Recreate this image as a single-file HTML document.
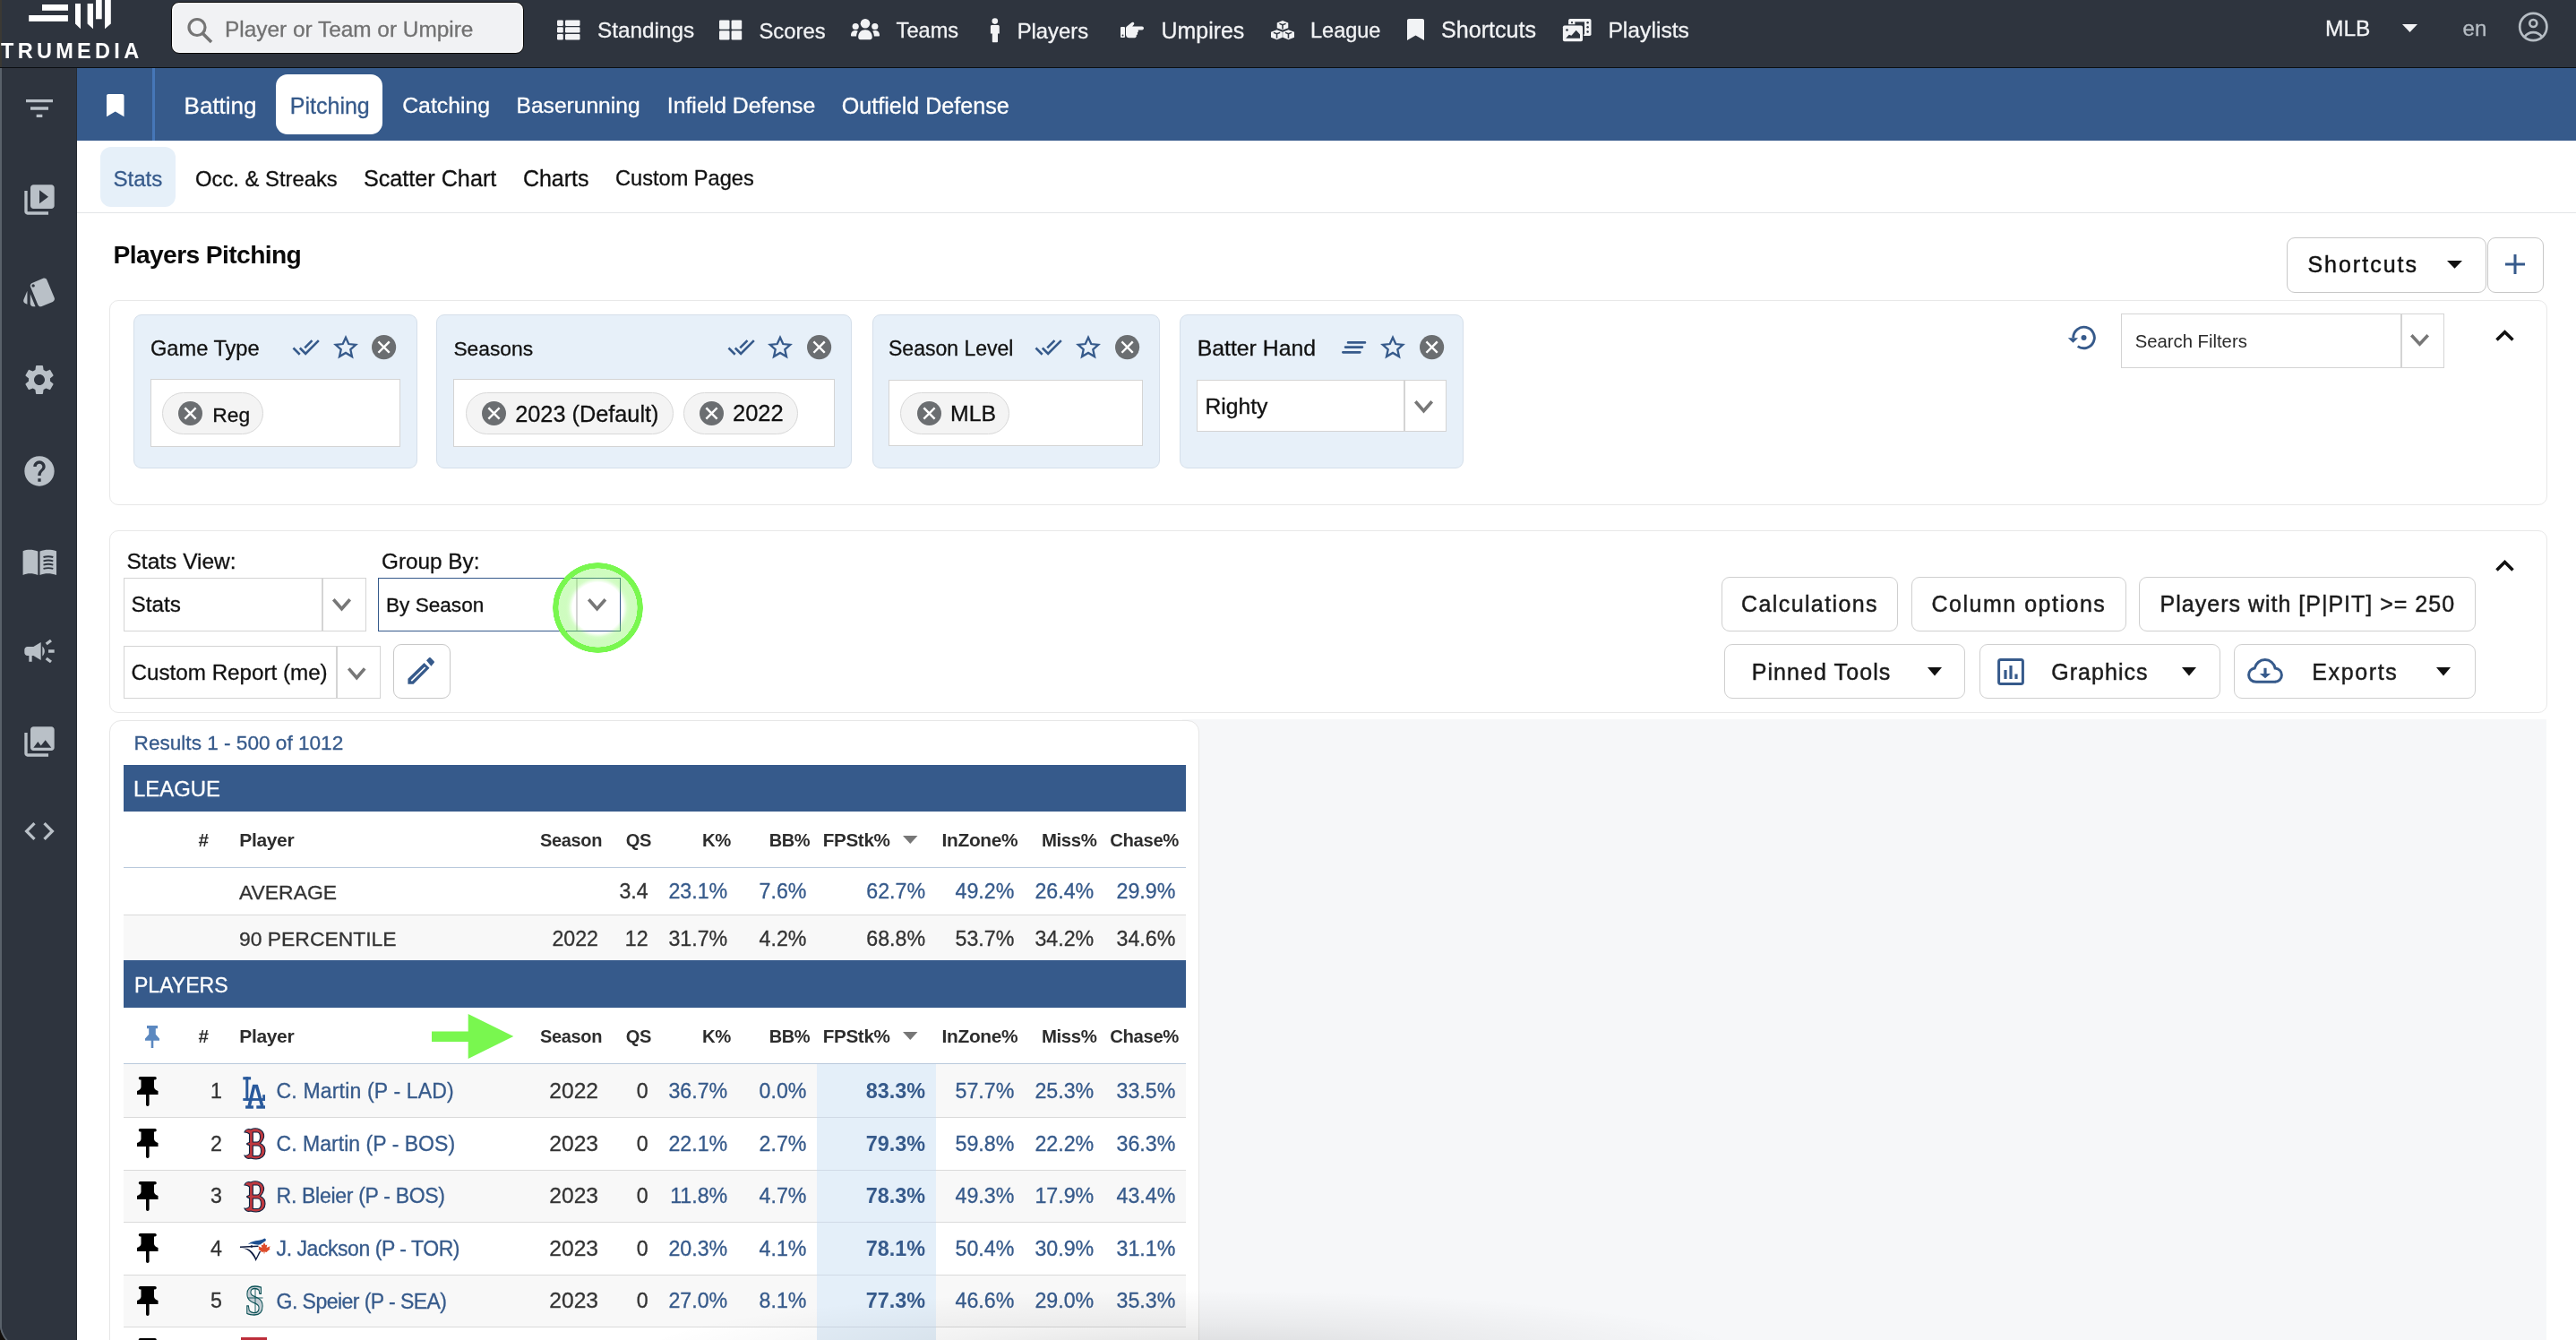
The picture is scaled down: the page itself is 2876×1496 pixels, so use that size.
<!DOCTYPE html><html><head><meta charset="utf-8"><style>html,body{margin:0;padding:0;}body{width:2876px;height:1496px;position:relative;overflow:hidden;background:#fff;font-family:"Liberation Sans",sans-serif;}.t{position:absolute;white-space:nowrap;}svg{overflow:visible;}</style></head><body><div id="root" style="position:absolute;left:0;top:0;width:2876px;height:1496px;overflow:hidden;background:#fff;will-change:transform"><div style="position:absolute;left:0px;top:0px;width:2876px;height:75px;box-sizing:border-box;background:#2e343e"></div>
<div style="position:absolute;left:0px;top:75px;width:2876px;height:1.2999999999999972px;box-sizing:border-box;background:#0b0e12"></div>
<div style="position:absolute;left:0px;top:0px;width:1.8px;height:75px;box-sizing:border-box;background:#3b3934"></div>
<svg style="position:absolute;left:0px;top:0px;" width="170" height="75" viewBox="0 0 170 75"><g fill="#fff"><rect x="47" y="5" width="29" height="6.8"/><rect x="32.2" y="17" width="43.7" height="6.9"/><path d="M84 4.1H90V32.3L84 26.5Z"/><path d="M97.6 4.1H104V32.3L97.6 26.5Z"/><rect x="107" y="0" width="6.7" height="21.3"/><path d="M117 0H123.8V26.5L117 32.3Z"/></g><text x="1" y="65" fill="#fff" font-family="Liberation Sans" font-weight="700" font-size="23.5" letter-spacing="4.3">TRUMEDIA</text></svg>
<div style="position:absolute;left:191px;top:2px;width:394px;height:58px;box-sizing:border-box;background:#f1f2f4;border:1.6px solid #050505;box-shadow:inset 0 0 0 1.3px #fff;border-radius:9px"></div>
<svg style="position:absolute;left:207px;top:18px;" width="34" height="32" viewBox="0 0 34 32"><circle cx="13" cy="12.5" r="9" fill="none" stroke="#757575" stroke-width="3.2"/><path d="M19.5 19.5L29 29" stroke="#757575" stroke-width="3.6" stroke-linecap="butt"/></svg>
<div class="t" style="left:251.0px;top:20.7px;font-size:24.4px;line-height:24.4px;color:#717171;font-weight:400;-webkit-text-stroke-width:0.3px;">Player or Team or Umpire</div>
<svg style="position:absolute;left:622px;top:22px;" width="26" height="23" viewBox="0 0 26 23"><g fill="#f2f3f5"><rect x="0" y="0.4" width="6.8" height="6.5" rx="1.2"/><rect x="9" y="0.4" width="16.5" height="6.5" rx="1.2"/><rect x="0" y="8.3" width="6.8" height="6.2" rx="1.2"/><rect x="9" y="8.3" width="16.5" height="6.2" rx="1.2"/><rect x="0" y="15.9" width="6.8" height="6.6" rx="1.2"/><rect x="9" y="15.9" width="16.5" height="6.6" rx="1.2"/></g></svg>
<div class="t" style="left:667.0px;top:22.0px;font-size:24.3px;line-height:24.3px;color:#f2f3f5;font-weight:400;-webkit-text-stroke-width:0.3px;">Standings</div>
<svg style="position:absolute;left:803px;top:22px;" width="26" height="23" viewBox="0 0 26 23"><g fill="#f2f3f5"><rect x="0" y="0.4" width="11.5" height="10.3" rx="1.2"/><rect x="13.6" y="0.4" width="11.6" height="10.3" rx="1.2"/><rect x="0" y="12.2" width="11.5" height="10.3" rx="1.2"/><rect x="13.6" y="12.2" width="11.6" height="10.3" rx="1.2"/></g></svg>
<div class="t" style="left:847.5px;top:22.5px;font-size:23.8px;line-height:23.8px;color:#f2f3f5;font-weight:400;-webkit-text-stroke-width:0.3px;">Scores</div>
<svg style="position:absolute;left:950px;top:21px;" width="32" height="24" viewBox="0 0 32 24"><g fill="#f2f3f5"><circle cx="16" cy="5.3" r="5.3"/><path d="M8.2 20.5c0-5 3.2-8.2 7.8-8.2s7.8 3.2 7.8 8.2c0 1.6-1 2.8-2.4 2.8H10.6c-1.4 0-2.4-1.2-2.4-2.8z"/><circle cx="5.2" cy="8.5" r="3.6"/><path d="M0 18.8c0-3.6 1.8-5.7 5.2-5.7 1 0 1.9.2 2.6.6-1 1.5-1.6 3.4-1.7 5.9H1.2C.5 19.6 0 19.3 0 18.8z"/><circle cx="26.8" cy="8.5" r="3.6"/><path d="M32 18.8c0-3.6-1.8-5.7-5.2-5.7-1 0-1.9.2-2.6.6 1 1.5 1.6 3.4 1.7 5.9h4.9c.7 0 1.2-.3 1.2-.8z"/></g></svg>
<div class="t" style="left:1000.6px;top:22.6px;font-size:23.6px;line-height:23.6px;color:#f2f3f5;font-weight:400;-webkit-text-stroke-width:0.3px;">Teams</div>
<svg style="position:absolute;left:1104px;top:20px;" width="13" height="28" viewBox="0 0 13 28"><g fill="#f2f3f5"><circle cx="6.8" cy="3.6" r="3.3"/><path d="M3.4 7.9h6.8c.9 0 1.6.7 1.6 1.6V17.6H10V26.2c0 .6-.5 1-1 1H4.8c-.5 0-1-.4-1-1V17.6H1.9V9.5c0-.9.6-1.6 1.5-1.6z"/></g></svg>
<div class="t" style="left:1135.7px;top:22.5px;font-size:23.8px;line-height:23.8px;color:#f2f3f5;font-weight:400;-webkit-text-stroke-width:0.3px;">Players</div>
<svg style="position:absolute;left:1251px;top:23px;" width="26" height="20" viewBox="0 0 26 20"><g fill="#f2f3f5"><rect x="0" y="7" width="5" height="12" rx="1"/><path d="M6 8.5c0-1.2.8-1.9 1.7-2.6L12 2.5c.9-.8 2-.9 2.8-.2.7.6.6 1.6 0 2.3l-1.6 2h10.9c1 0 1.9.8 1.9 1.9s-.9 1.9-1.9 1.9h-4.6c.3.4.4.8.4 1.3 0 .8-.5 1.5-1.2 1.8.2.3.3.7.3 1.1 0 .9-.6 1.6-1.4 1.8.1.3.2.5.2.9 0 1-.8 1.9-1.9 1.9H9.5c-2 0-3.5-1.6-3.5-3.5z"/><circle cx="2.5" cy="16.5" r="1" fill="#2e343e"/></g></svg>
<div class="t" style="left:1296.6px;top:21.5px;font-size:24.9px;line-height:24.9px;color:#f2f3f5;font-weight:400;-webkit-text-stroke-width:0.3px;">Umpires</div>
<svg style="position:absolute;left:1419px;top:23px;" width="26" height="23" viewBox="0 0 26 23"><g fill="#f2f3f5"><g transform="scale(0.963,0.92)"><path d="M13.5 0l6.5 2.6v6.3l-6.5 2.6-6.5-2.6V2.6z"/><path d="M6.8 11.2l6.5 2.6v6.6l-6.5 2.8L0 20.4v-6.6z"/><path d="M20.2 11.2l6.8 2.6v6.6l-6.8 2.8-6.5-2.8v-6.6z"/><path d="M3 14.5l3.8 1.5 3.8-1.5M16.6 14.5l3.6 1.5 3.8-1.5M9.8 3.7l3.7 1.5 3.7-1.5" stroke="#2e343e" stroke-width="1.6" fill="none"/><path d="M6.8 16v5.5M20.2 16v5.5M13.5 5.2v5" stroke="#2e343e" stroke-width="1.6"/></g></g></svg>
<div class="t" style="left:1463.0px;top:22.7px;font-size:23.5px;line-height:23.5px;color:#f2f3f5;font-weight:400;-webkit-text-stroke-width:0.3px;">League</div>
<svg style="position:absolute;left:1571px;top:21px;" width="19" height="24" viewBox="0 0 19 24"><g fill="#f2f3f5"><path d="M0 2c0-1.1.9-2 2-2h15c1.1 0 2 .9 2 2v22l-9.5-5.6L0 24z"/></g></svg>
<div class="t" style="left:1609.0px;top:21.4px;font-size:25.1px;line-height:25.1px;color:#f2f3f5;font-weight:400;-webkit-text-stroke-width:0.3px;">Shortcuts</div>
<svg style="position:absolute;left:1730px;top:12px;" width="50" height="40" viewBox="0 0 50 40"><rect x="21.1" y="8.9" width="25.4" height="19.1" rx="1.8" fill="#f2f3f5"/><rect x="28.4" y="12.4" width="10.6" height="14" fill="#2e343e"/><circle cx="25" cy="13.2" r="1.1" fill="#2e343e"/><circle cx="42.6" cy="13.3" r="1.25" fill="#2e343e"/><circle cx="42.6" cy="18.2" r="1.25" fill="#2e343e"/><circle cx="42.6" cy="23.5" r="1.25" fill="#2e343e"/><rect x="13.7" y="15.3" width="24.5" height="20.2" rx="2.2" fill="#2e343e"/><rect x="14.9" y="16.5" width="22.1" height="17.8" rx="1.8" fill="#f2f3f5"/><circle cx="19.5" cy="21.5" r="1.35" fill="#2e343e"/><path d="M18.2 30.7L21.8 26.7L24.4 27.7L29.7 21.8L34 26.4V30.7Z" fill="#2e343e"/></svg>
<div class="t" style="left:1795.4px;top:21.7px;font-size:24.7px;line-height:24.7px;color:#f2f3f5;font-weight:400;-webkit-text-stroke-width:0.3px;">Playlists</div>
<div class="t" style="left:2596.0px;top:19.5px;font-size:24.5px;line-height:24.5px;color:#f2f3f5;font-weight:400;-webkit-text-stroke-width:0.3px;">MLB</div>
<svg style="position:absolute;left:2682px;top:27px;" width="17" height="10" viewBox="0 0 17 10"><path d="M0 0h17L8.5 9z" fill="#f2f3f5"/></svg>
<div class="t" style="left:2749.6px;top:19.9px;font-size:24px;line-height:24px;color:#b6bdc4;font-weight:400;-webkit-text-stroke-width:0.3px;">en</div>
<svg style="position:absolute;left:2810px;top:12px;" width="36" height="36" viewBox="0 0 36 36"><g fill="none" stroke="#b6bdc4" stroke-width="2.7"><circle cx="18.3" cy="18" r="15.1"/><circle cx="18.3" cy="14" r="4"/><path d="M8.6 29.3C11 25.8 14.5 24.2 18.3 24.2S25.6 25.8 28 29.3"/></g></svg>
<div style="position:absolute;left:0px;top:76px;width:86px;height:1420px;box-sizing:border-box;background:#2e343e"></div>
<div style="position:absolute;left:0px;top:76.3px;width:1.8px;height:1419.7px;box-sizing:border-box;background:#59616a"></div>
<div style="position:absolute;left:85px;top:76px;width:1px;height:1420px;box-sizing:border-box;background:#262b33"></div>
<svg style="position:absolute;left:0px;top:1466px;" width="40" height="30" viewBox="0 0 40 30"><path d="M0 8A29.3 29.3 0 0 0 7.5 31L0 31Z" fill="#120e0b"/><path d="M0.9 8A29.3 29.3 0 0 0 8.3 31" fill="none" stroke="#5a626b" stroke-width="1.8"/></svg>
<svg style="position:absolute;left:24.299599999999998px;top:100.9996px;" width="40.0008" height="40.0008" viewBox="0 0 24 24"><path fill="#b9c0c7" d="M10 18h4v-2h-4v2zM3 6v2h18V6H3zm3 7h12v-2H6v2z"/></svg>
<svg style="position:absolute;left:24.299599999999998px;top:202.9996px;" width="40.0008" height="40.0008" viewBox="0 0 24 24"><path fill="#b9c0c7" d="M4 6H2v14c0 1.1.9 2 2 2h14v-2H4V6zm16-4H8c-1.1 0-2 .9-2 2v12c0 1.1.9 2 2 2h12c1.1 0 2-.9 2-2V4c0-1.1-.9-2-2-2zm-8 12.5v-9l6 4.5-6 4.5z"/></svg>
<svg style="position:absolute;left:24.299599999999998px;top:305.5996px;" width="40.0008" height="40.0008" viewBox="0 0 24 24"><path fill="#b9c0c7" d="M2.53 19.65l1.34.56v-9.03l-2.43 5.86c-.41 1.02.08 2.19 1.09 2.61zm19.5-3.7L17.07 3.98c-.31-.75-1.04-1.21-1.81-1.23-.26 0-.53.04-.79.15L7.1 5.950c-.75.31-1.21 1.03-1.23 1.8-.01.27.04.54.15.8l4.96 11.97c.31.76 1.05 1.22 1.83 1.230.26 0 .52-.05.77-.15l7.36-3.05c1.02-.42 1.51-1.59 1.09-2.6zM7.88 8.75c-.55 0-1-.45-1-1s.45-1 1-1 1 .45 1 1-.45 1-1 1zm-2 11c0 1.1.9 2 2 2h1.45l-3.45-8.34v6.34z"/></svg>
<svg style="position:absolute;left:24.299599999999998px;top:403.9996px;" width="40.0008" height="40.0008" viewBox="0 0 24 24"><path fill="#b9c0c7" d="M19.14,12.94c0.04-0.3,0.06-0.61,0.06-0.94c0-0.32-0.02-0.64-0.07-0.94l2.03-1.58c0.18-0.14,0.23-0.41,0.12-0.61 l-1.92-3.32c-0.12-0.22-0.37-0.29-0.59-0.22l-2.39,0.96c-0.5-0.38-1.03-0.7-1.62-0.94L14.4,2.81c-0.04-0.24-0.24-0.41-0.48-0.41 h-3.84c-0.24,0-0.43,0.17-0.47,0.41L9.25,5.35C8.66,5.59,8.12,5.92,7.63,6.29L5.24,5.33c-0.22-0.08-0.47,0-0.59,0.22L2.74,8.87 C2.62,9.08,2.66,9.34,2.86,9.48l2.03,1.58C4.84,11.36,4.8,11.69,4.8,12s0.02,0.64,0.07,0.94l-2.03,1.58 c-0.18,0.14-0.23,0.41-0.12,0.61l1.920,3.32c0.12,0.22,0.37,0.29,0.59,0.22l2.39-0.96c0.5,0.38,1.03,0.7,1.62,0.94l0.36,2.54 c0.05,0.24,0.24,0.41,0.48,0.41h3.84c0.24,0,0.44-0.17,0.47-0.41l0.36-2.54c0.59-0.24,1.13-0.56,1.62-0.94l2.39,0.96 c0.22,0.08,0.47,0,0.59-0.22l1.92-3.32c0.12-0.22,0.07-0.47-0.12-0.61L19.14,12.94z M12,15.6c-1.98,0-3.6-1.62-3.6-3.6 s1.62-3.6,3.6-3.6s3.6,1.62,3.6,3.6S13.98,15.6,12,15.6z"/></svg>
<svg style="position:absolute;left:24.299599999999998px;top:505.9996px;" width="40.0008" height="40.0008" viewBox="0 0 24 24"><path fill="#b9c0c7" d="M12 2C6.48 2 2 6.48 2 12s4.48 10 10 10 10-4.48 10-10S17.52 2 12 2zm1 17h-2v-2h2v2zm2.07-7.750l-.9.92C13.45 12.9 13 13.5 13 15h-2v-.5c0-1.1.45-2.1 1.17-2.83l1.24-1.26c.37-.36.59-.86.59-1.41 0-1.1-.9-2-2-2s-2 .9-2 2H8c0-2.21 1.79-4 4-4s4 1.79 4 4c0 .88-.36 1.68-.93 2.25z"/></svg>
<svg style="position:absolute;left:25px;top:612px;" width="40" height="32" viewBox="0 0 40 32"><path fill="#b9c0c7" d="M0.6 3.2C5.5 1.2 11.5 1.2 17.3 3.6V30C11.5 27.8 5.5 27.8 0.6 30Z M19.5 3.6C25.3 1.2 31.3 1.2 38 3.2V30C31.3 27.8 25.3 27.8 19.5 30Z"/><path d="M23.5 10C27 9 31 9 34.3 10M23.5 14.3C27 13.3 31 13.3 34.3 14.3M23.5 18.6C27 17.6 31 17.6 34.3 18.6M23.5 22.9C27 21.9 31 21.9 34.3 22.9" stroke="#2e343e" stroke-width="1.9" fill="none"/></svg>
<svg style="position:absolute;left:24.299599999999998px;top:706.5996px;" width="40.0008" height="40.0008" viewBox="0 0 24 24"><path fill="#b9c0c7" d="M18 11v2h4v-2h-4zm-2 6.61c.96.71 2.21 1.65 3.2 2.39.4-.53.8-1.07 1.2-1.6-.99-.74-2.24-1.68-3.2-2.4-.4.54-.8 1.08-1.2 1.61zM20.4 5.6c-.4-.53-.8-1.07-1.2-1.6-.99.74-2.24 1.68-3.2 2.4.4.53.8 1.070 1.2 1.6.96-.72 2.21-1.65 3.2-2.4zM4 9c-1.1 0-2 .9-2 2v2c0 1.1.9 2 2 2h1v4h2v-4h1l5 3V6L8 9H4zm11.5 3c0-1.33-.58-2.53-1.5-3.35v6.69c.92-.81 1.5-2.01 1.5-3.34z"/></svg>
<svg style="position:absolute;left:24.299599999999998px;top:807.9996px;" width="40.0008" height="40.0008" viewBox="0 0 24 24"><path fill="#b9c0c7" d="M22 16V4c0-1.1-.9-2-2-2H8c-1.1 0-2 .9-2 2v12c0 1.1.9 2 2 2h12c1.1 0 2-.9 2-2zm-11-4l2.03 2.71L16 11l4 5H8l3-4zM2 6v14c0 1.1.9 2 2 2h14v-2H4V6H2z"/></svg>
<svg style="position:absolute;left:24.299599999999998px;top:907.7995999999999px;" width="40.0008" height="40.0008" viewBox="0 0 24 24"><path fill="#b9c0c7" d="M9.4 16.6L4.8 12l4.6-4.6L8 6l-6 6 6 6 1.4-1.4zm5.2 0l4.6-4.6-4.6-4.6L16 6l6 6-6 6-1.4-1.4z"/></svg>
<div style="position:absolute;left:86px;top:76px;width:2790px;height:81px;box-sizing:border-box;background:#365a8b"></div>
<svg style="position:absolute;left:118.8px;top:104.8px;" width="19.5" height="25.2" viewBox="0 0 19.5 25.2"><path d="M0 2C0 .9.9 0 2 0h15.5c1.1 0 2 .9 2 2v23.2l-9.75-5.7L0 25.2z" fill="#fff"/></svg>
<div style="position:absolute;left:170px;top:76px;width:3px;height:81px;box-sizing:border-box;background:#4677b8"></div>
<div style="position:absolute;left:308px;top:83px;width:119px;height:67px;box-sizing:border-box;background:#fff;border-radius:13px"></div>
<div class="t" style="left:205.6px;top:105.0px;font-size:26px;line-height:26px;color:#fff;font-weight:400;-webkit-text-stroke-width:0.3px;">Batting</div>
<div class="t" style="left:323.8px;top:105.8px;font-size:25px;line-height:25px;color:#365a8b;font-weight:400;-webkit-text-stroke-width:0.3px;">Pitching</div>
<div class="t" style="left:449.2px;top:106.0px;font-size:24.8px;line-height:24.8px;color:#fff;font-weight:400;-webkit-text-stroke-width:0.3px;">Catching</div>
<div class="t" style="left:576.5px;top:106.2px;font-size:24.6px;line-height:24.6px;color:#fff;font-weight:400;-webkit-text-stroke-width:0.3px;">Baserunning</div>
<div class="t" style="left:744.8px;top:106.0px;font-size:24.8px;line-height:24.8px;color:#fff;font-weight:400;-webkit-text-stroke-width:0.3px;">Infield Defense</div>
<div class="t" style="left:939.8px;top:105.8px;font-size:25.1px;line-height:25.1px;color:#fff;font-weight:400;-webkit-text-stroke-width:0.3px;">Outfield Defense</div>
<div style="position:absolute;left:86px;top:157px;width:2790px;height:81px;box-sizing:border-box;background:#fff"></div>
<div style="position:absolute;left:112px;top:164px;width:84px;height:67px;box-sizing:border-box;background:#e6f0f9;border-radius:12px"></div>
<div class="t" style="left:126.4px;top:187.6px;font-size:24.1px;line-height:24.1px;color:#365a8b;font-weight:400;-webkit-text-stroke-width:0.3px;">Stats</div>
<div class="t" style="left:218.0px;top:187.9px;font-size:23.8px;line-height:23.8px;color:#111;font-weight:400;-webkit-text-stroke-width:0.3px;">Occ. &amp; Streaks</div>
<div class="t" style="left:405.9px;top:186.7px;font-size:25.2px;line-height:25.2px;color:#111;font-weight:400;-webkit-text-stroke-width:0.3px;">Scatter Chart</div>
<div class="t" style="left:583.9px;top:186.8px;font-size:25px;line-height:25px;color:#111;font-weight:400;-webkit-text-stroke-width:0.3px;">Charts</div>
<div class="t" style="left:687.0px;top:188.0px;font-size:23.6px;line-height:23.6px;color:#111;font-weight:400;-webkit-text-stroke-width:0.3px;">Custom Pages</div>
<div style="position:absolute;left:86px;top:237px;width:2790px;height:1px;box-sizing:border-box;background:#e3e5e8"></div>
<div class="t" style="left:126.5px;top:270.1px;font-size:28.2px;line-height:28.2px;color:#0a0a0a;font-weight:700;letter-spacing:-0.6px;">Players Pitching</div>
<div style="position:absolute;left:2553px;top:265px;width:223px;height:62px;box-sizing:border-box;background:#fff;border:1.5px solid #c8c8c8;border-radius:9px"></div>
<div class="t" style="left:2576.4px;top:283.1px;font-size:25px;line-height:25px;color:#111;font-weight:400;letter-spacing:2.0px;-webkit-text-stroke:0.45px #111;">Shortcuts</div>
<svg style="position:absolute;left:2732px;top:290.5px;" width="17" height="9" viewBox="0 0 17 9"><path d="M0 0h17L8.5 8.8z" fill="#111"/></svg>
<div style="position:absolute;left:2777px;top:265px;width:63px;height:62px;box-sizing:border-box;background:#fff;border:1.5px solid #c8c8c8;border-radius:9px"></div>
<svg style="position:absolute;left:2797px;top:284px;" width="22" height="22" viewBox="0 0 22 22"><path d="M11 0v22M0 11h22" stroke="#365a8b" stroke-width="3"/></svg>
<div style="position:absolute;left:122px;top:335px;width:2722px;height:229px;box-sizing:border-box;background:#fff;border:1.5px solid #e8e8e8;border-radius:10px"></div>
<div style="position:absolute;left:149px;top:350.5px;width:317px;height:172.5px;box-sizing:border-box;background:#e7f0f9;border:1.5px solid #d5dfea;border-radius:9px"></div>
<div class="t" style="left:168.0px;top:377.7px;font-size:23.6px;line-height:23.6px;color:#111;font-weight:400;-webkit-text-stroke-width:0.3px;">Game Type</div>
<svg style="position:absolute;left:325.8px;top:372.2px;" width="31.2" height="31.2" viewBox="0 0 24 24"><path fill="#365a8b" d="M18 7l-1.41-1.41-6.34 6.34 1.41 1.41L18 7zm4.24-1.41L11.66 16.17 7.48 12l-1.41 1.41L11.66 19l12-12-1.42-1.41zM.41 13.41L6 19l1.41-1.41L1.83 12 .41 13.41z"/></svg>
<svg style="position:absolute;left:372.5px;top:374.8px;" width="26" height="25" viewBox="0 0 27 26"><path d="M13.5 1.8l3.4 7.6 8.3.8-6.2 5.6 1.8 8.2-7.3-4.3-7.3 4.3 1.8-8.2-6.2-5.6 8.3-.8z" fill="none" stroke="#365a8b" stroke-width="2.4" stroke-linejoin="miter"/></svg>
<svg style="position:absolute;left:415.09999999999997px;top:374.4px;" width="27.2" height="27.2" viewBox="0 0 27.2 27.2"><circle cx="13.6" cy="13.6" r="13.6" fill="#6b6e71"/><path d="M8.3 8.3L18.9 18.9M18.9 8.3L8.3 18.9" stroke="#fff" stroke-width="2.4" stroke-linecap="square"/></svg>
<div style="position:absolute;left:168px;top:423px;width:279px;height:76px;box-sizing:border-box;background:#fff;border:1.5px solid #d4d4d4"></div>
<div style="position:absolute;left:181px;top:438px;width:112.5px;height:47px;box-sizing:border-box;background:#f4f4f4;border:1.5px solid #d8d8d8;border-radius:24px"></div>
<svg style="position:absolute;left:199.0px;top:447.7px;" width="27.0" height="27.0" viewBox="0 0 27.0 27.0"><circle cx="13.5" cy="13.5" r="13.5" fill="#6b6e71"/><path d="M8.2 8.2L18.8 18.8M18.8 8.2L8.2 18.8" stroke="#fff" stroke-width="2.4" stroke-linecap="square"/></svg>
<div class="t" style="left:237.3px;top:451.7px;font-size:22.8px;line-height:22.8px;color:#111;font-weight:400;-webkit-text-stroke-width:0.3px;">Reg</div>
<div style="position:absolute;left:487px;top:350.5px;width:464px;height:172.5px;box-sizing:border-box;background:#e7f0f9;border:1.5px solid #d5dfea;border-radius:9px"></div>
<div class="t" style="left:506.4px;top:378.4px;font-size:22.8px;line-height:22.8px;color:#111;font-weight:400;-webkit-text-stroke-width:0.3px;">Seasons</div>
<svg style="position:absolute;left:811.5999999999999px;top:372.2px;" width="31.2" height="31.2" viewBox="0 0 24 24"><path fill="#365a8b" d="M18 7l-1.41-1.41-6.34 6.34 1.41 1.41L18 7zm4.24-1.41L11.66 16.17 7.48 12l-1.41 1.41L11.66 19l12-12-1.42-1.41zM.41 13.41L6 19l1.41-1.41L1.83 12 .41 13.41z"/></svg>
<svg style="position:absolute;left:858.0px;top:374.8px;" width="26" height="25" viewBox="0 0 27 26"><path d="M13.5 1.8l3.4 7.6 8.3.8-6.2 5.6 1.8 8.2-7.3-4.3-7.3 4.3 1.8-8.2-6.2-5.6 8.3-.8z" fill="none" stroke="#365a8b" stroke-width="2.4" stroke-linejoin="miter"/></svg>
<svg style="position:absolute;left:900.5px;top:374.4px;" width="27.2" height="27.2" viewBox="0 0 27.2 27.2"><circle cx="13.6" cy="13.6" r="13.6" fill="#6b6e71"/><path d="M8.3 8.3L18.9 18.9M18.9 8.3L8.3 18.9" stroke="#fff" stroke-width="2.4" stroke-linecap="square"/></svg>
<div style="position:absolute;left:506.4px;top:423px;width:425.20000000000005px;height:76px;box-sizing:border-box;background:#fff;border:1.5px solid #d4d4d4"></div>
<div style="position:absolute;left:520.3px;top:438px;width:231.30000000000007px;height:47px;box-sizing:border-box;background:#f4f4f4;border:1.5px solid #d8d8d8;border-radius:24px"></div>
<svg style="position:absolute;left:537.9px;top:447.7px;" width="27.0" height="27.0" viewBox="0 0 27.0 27.0"><circle cx="13.5" cy="13.5" r="13.5" fill="#6b6e71"/><path d="M8.2 8.2L18.8 18.8M18.8 8.2L8.2 18.8" stroke="#fff" stroke-width="2.4" stroke-linecap="square"/></svg>
<div class="t" style="left:575.2px;top:449.6px;font-size:25.3px;line-height:25.3px;color:#111;font-weight:400;-webkit-text-stroke-width:0.3px;">2023 (Default)</div>
<div style="position:absolute;left:763.2px;top:438px;width:127.5px;height:47px;box-sizing:border-box;background:#f4f4f4;border:1.5px solid #d8d8d8;border-radius:24px"></div>
<svg style="position:absolute;left:780.8px;top:447.7px;" width="27.0" height="27.0" viewBox="0 0 27.0 27.0"><circle cx="13.5" cy="13.5" r="13.5" fill="#6b6e71"/><path d="M8.2 8.2L18.8 18.8M18.8 8.2L8.2 18.8" stroke="#fff" stroke-width="2.4" stroke-linecap="square"/></svg>
<div class="t" style="left:818.0px;top:449.4px;font-size:25.5px;line-height:25.5px;color:#111;font-weight:400;-webkit-text-stroke-width:0.3px;">2022</div>
<div style="position:absolute;left:973.6px;top:350.5px;width:320.9999999999999px;height:172.5px;box-sizing:border-box;background:#e7f0f9;border:1.5px solid #d5dfea;border-radius:9px"></div>
<div class="t" style="left:992.0px;top:378.2px;font-size:23px;line-height:23px;color:#111;font-weight:400;-webkit-text-stroke-width:0.3px;">Season Level</div>
<svg style="position:absolute;left:1155.3px;top:372.2px;" width="31.2" height="31.2" viewBox="0 0 24 24"><path fill="#365a8b" d="M18 7l-1.41-1.41-6.34 6.34 1.41 1.41L18 7zm4.24-1.41L11.66 16.17 7.48 12l-1.41 1.41L11.66 19l12-12-1.42-1.41zM.41 13.41L6 19l1.41-1.41L1.83 12 .41 13.41z"/></svg>
<svg style="position:absolute;left:1202.0px;top:374.8px;" width="26" height="25" viewBox="0 0 27 26"><path d="M13.5 1.8l3.4 7.6 8.3.8-6.2 5.6 1.8 8.2-7.3-4.3-7.3 4.3 1.8-8.2-6.2-5.6 8.3-.8z" fill="none" stroke="#365a8b" stroke-width="2.4" stroke-linejoin="miter"/></svg>
<svg style="position:absolute;left:1244.8000000000002px;top:374.4px;" width="27.2" height="27.2" viewBox="0 0 27.2 27.2"><circle cx="13.6" cy="13.6" r="13.6" fill="#6b6e71"/><path d="M8.3 8.3L18.9 18.9M18.9 8.3L8.3 18.9" stroke="#fff" stroke-width="2.4" stroke-linecap="square"/></svg>
<div style="position:absolute;left:992px;top:423.8px;width:283.5px;height:74.69999999999999px;box-sizing:border-box;background:#fff;border:1.5px solid #d4d4d4"></div>
<div style="position:absolute;left:1005px;top:438px;width:122.40000000000009px;height:47px;box-sizing:border-box;background:#f4f4f4;border:1.5px solid #d8d8d8;border-radius:24px"></div>
<svg style="position:absolute;left:1023.5px;top:447.7px;" width="27.0" height="27.0" viewBox="0 0 27.0 27.0"><circle cx="13.5" cy="13.5" r="13.5" fill="#6b6e71"/><path d="M8.2 8.2L18.8 18.8M18.8 8.2L8.2 18.8" stroke="#fff" stroke-width="2.4" stroke-linecap="square"/></svg>
<div class="t" style="left:1061.0px;top:450.0px;font-size:24.8px;line-height:24.8px;color:#111;font-weight:400;-webkit-text-stroke-width:0.3px;">MLB</div>
<div style="position:absolute;left:1317.4px;top:350.5px;width:316.79999999999995px;height:172.5px;box-sizing:border-box;background:#e7f0f9;border:1.5px solid #d5dfea;border-radius:9px"></div>
<div class="t" style="left:1336.7px;top:376.7px;font-size:24.8px;line-height:24.8px;color:#111;font-weight:400;-webkit-text-stroke-width:0.3px;">Batter Hand</div>
<svg style="position:absolute;left:1490.0px;top:370px;" width="40" height="35" viewBox="0 0 40 35"><path d="M15.1 12.4H33.9M12.1 17.6H30.9M9.4 23.3H28.3" stroke="#365a8b" stroke-width="2.8" stroke-linecap="round"/></svg>
<svg style="position:absolute;left:1541.5px;top:374.8px;" width="26" height="25" viewBox="0 0 27 26"><path d="M13.5 1.8l3.4 7.6 8.3.8-6.2 5.6 1.8 8.2-7.3-4.3-7.3 4.3 1.8-8.2-6.2-5.6 8.3-.8z" fill="none" stroke="#365a8b" stroke-width="2.4" stroke-linejoin="miter"/></svg>
<svg style="position:absolute;left:1584.5px;top:374.4px;" width="27.2" height="27.2" viewBox="0 0 27.2 27.2"><circle cx="13.6" cy="13.6" r="13.6" fill="#6b6e71"/><path d="M8.3 8.3L18.9 18.9M18.9 8.3L8.3 18.9" stroke="#fff" stroke-width="2.4" stroke-linecap="square"/></svg>
<div style="position:absolute;left:1336.4px;top:423.8px;width:278.79999999999995px;height:58.39999999999998px;box-sizing:border-box;background:#fff;border:1.5px solid #d4d4d4"></div>
<div style="position:absolute;left:1567px;top:423.8px;width:1.5px;height:58.39999999999998px;box-sizing:border-box;background:#d4d4d4"></div>
<div class="t" style="left:1345.4px;top:442.3px;font-size:24.7px;line-height:24.7px;color:#111;font-weight:400;-webkit-text-stroke-width:0.3px;">Righty</div>
<svg style="position:absolute;left:1579px;top:445px;" width="21" height="17" viewBox="0 -2 21 17"><path d="M1.3 1.3L10.5 11.7L19.7 1.3" stroke="#777" stroke-width="3.6" fill="none"/></svg>
<svg style="position:absolute;left:2300px;top:350px;" width="50" height="50" viewBox="0 0 50 50"><path d="M14.7 26.9A11.8 11.8 0 1 1 19.7 36.6" fill="none" stroke="#365a8b" stroke-width="2.9"/><path d="M8.8 27.2H20.1L14.5 32.8z" fill="#365a8b"/><circle cx="26.5" cy="26.9" r="3" fill="#365a8b"/></svg>
<div style="position:absolute;left:2368px;top:350px;width:361px;height:61px;box-sizing:border-box;background:#fff;border:1.5px solid #d4d4d4"></div>
<div style="position:absolute;left:2680px;top:350px;width:1.5px;height:61px;box-sizing:border-box;background:#d4d4d4"></div>
<div class="t" style="left:2383.7px;top:371.2px;font-size:20.3px;line-height:20.3px;color:#2a2a2a;font-weight:400;-webkit-text-stroke-width:0px;">Search Filters</div>
<svg style="position:absolute;left:2691px;top:371px;" width="21" height="16.5" viewBox="0 -2 21 16.5"><path d="M1.3 1.3L10.5 11.2L19.7 1.3" stroke="#777" stroke-width="3.6" fill="none"/></svg>
<svg style="position:absolute;left:2786px;top:369px;" width="21" height="12" viewBox="0 0 21 12"><path d="M1.5 10.5L10.5 1.8L19.5 10.5" stroke="#111" stroke-width="3.6" fill="none"/></svg>
<div style="position:absolute;left:122px;top:592px;width:2722px;height:204px;box-sizing:border-box;background:#fff;border:1.5px solid #e8e8e8;border-radius:10px"></div>
<div class="t" style="left:141.5px;top:615.3px;font-size:24.5px;line-height:24.5px;color:#111;font-weight:400;-webkit-text-stroke-width:0.3px;">Stats View:</div>
<div class="t" style="left:426.0px;top:615.4px;font-size:24.3px;line-height:24.3px;color:#111;font-weight:400;-webkit-text-stroke-width:0.3px;">Group By:</div>
<div style="position:absolute;left:138px;top:645px;width:270.5px;height:59.5px;box-sizing:border-box;background:#fff;border:1.5px solid #d4d4d4"></div>
<div style="position:absolute;left:359px;top:645px;width:1.5px;height:59.5px;box-sizing:border-box;background:#d4d4d4"></div>
<div class="t" style="left:146.6px;top:663.4px;font-size:24.3px;line-height:24.3px;color:#111;font-weight:400;-webkit-text-stroke-width:0.3px;">Stats</div>
<svg style="position:absolute;left:371px;top:666px;" width="21" height="17" viewBox="0 -2 21 17"><path d="M1.3 1.3L10.5 11.7L19.7 1.3" stroke="#777" stroke-width="3.6" fill="none"/></svg>
<div style="position:absolute;left:422px;top:645px;width:270.5px;height:59.5px;box-sizing:border-box;background:#fff;border:1.5px solid #365a8b"></div>
<div style="position:absolute;left:643px;top:646px;width:1.5px;height:58px;box-sizing:border-box;background:#d4d4d4"></div>
<div class="t" style="left:431.0px;top:664.9px;font-size:22.6px;line-height:22.6px;color:#111;font-weight:400;-webkit-text-stroke-width:0.3px;">By Season</div>
<div style="position:absolute;left:138px;top:721px;width:286.5px;height:58.5px;box-sizing:border-box;background:#fff;border:1.5px solid #d4d4d4"></div>
<div style="position:absolute;left:375px;top:721px;width:1.5px;height:58.5px;box-sizing:border-box;background:#d4d4d4"></div>
<div class="t" style="left:146.6px;top:739.2px;font-size:24.2px;line-height:24.2px;color:#111;font-weight:400;-webkit-text-stroke-width:0.3px;">Custom Report (me)</div>
<svg style="position:absolute;left:387.6px;top:742.5px;" width="20.5" height="17" viewBox="0 -2 20.5 17"><path d="M1.3 1.3L10.25 11.7L19.2 1.3" stroke="#777" stroke-width="3.6" fill="none"/></svg>
<div style="position:absolute;left:438.5px;top:719px;width:64.0px;height:60.5px;box-sizing:border-box;background:#fff;border:1.5px solid #c8c8c8;border-radius:9px"></div>
<svg style="position:absolute;left:430px;top:710px;" width="90" height="80" viewBox="0 0 90 80"><path fill="#365a8b" d="M46 27.2L49 24.3C49.5 23.8 50.2 23.8 50.7 24.3L54.6 28.2C55.1 28.7 55.1 29.4 54.6 29.9L51.4 33.8Z"/><path fill-rule="evenodd" fill="#365a8b" d="M25.4 47.7L43.6 30.1L49.5 35.8L31.6 53.7H25.4ZM28.6 49.6L44.1 34.4L45.3 35.6L29.9 50.8Z"/></svg>
<div style="position:absolute;left:617px;top:627.8px;width:100.8px;height:100.8px;border-radius:50%;box-sizing:border-box;background:radial-gradient(circle closest-side, rgba(121,247,79,0) 0, rgba(121,247,79,0) 56%, rgba(121,247,79,0.3) 65%, rgba(121,247,79,0.36) 71%, rgba(121,247,79,0.36) 87%, #79f74f 87.5%, #79f74f 99%, rgba(121,247,79,0) 100%);"></div>
<svg style="position:absolute;left:655.5px;top:666.3px;" width="21.2" height="17" viewBox="0 -2 21.2 17"><path d="M1.3 1.3L10.6 11.7L19.9 1.3" stroke="#777" stroke-width="3.6" fill="none"/></svg>
<div style="position:absolute;left:1921.6px;top:644px;width:197.0px;height:60.5px;box-sizing:border-box;background:#fff;border:1.5px solid #cfcfcf;border-radius:9px"></div>
<div class="t" style="left:1944.1px;top:661.9px;font-size:25px;line-height:25px;color:#1b1b1b;font-weight:400;letter-spacing:1.38px;-webkit-text-stroke:0.45px #1b1b1b;">Calculations</div>
<div style="position:absolute;left:2134px;top:644px;width:239.69999999999982px;height:60.5px;box-sizing:border-box;background:#fff;border:1.5px solid #cfcfcf;border-radius:9px"></div>
<div class="t" style="left:2156.5px;top:661.9px;font-size:25px;line-height:25px;color:#1b1b1b;font-weight:400;letter-spacing:1.51px;-webkit-text-stroke:0.45px #1b1b1b;">Column options</div>
<div style="position:absolute;left:2388px;top:644px;width:375.5999999999999px;height:60.5px;box-sizing:border-box;background:#fff;border:1.5px solid #cfcfcf;border-radius:9px"></div>
<div class="t" style="left:2411.6px;top:661.9px;font-size:25px;line-height:25px;color:#1b1b1b;font-weight:400;letter-spacing:1.0px;-webkit-text-stroke:0.45px #1b1b1b;">Players with [P|PIT] &gt;= 250</div>
<div style="position:absolute;left:1925px;top:719px;width:269px;height:60.5px;box-sizing:border-box;background:#fff;border:1.5px solid #cfcfcf;border-radius:9px"></div>
<div class="t" style="left:1955.7px;top:737.8px;font-size:25px;line-height:25px;color:#1b1b1b;font-weight:400;letter-spacing:1.08px;-webkit-text-stroke:0.45px #1b1b1b;">Pinned Tools</div>
<svg style="position:absolute;left:2152px;top:745px;" width="16" height="9.5" viewBox="0 0 16 9.5"><path d="M0 0h16L8 9.4z" fill="#111"/></svg>
<div style="position:absolute;left:2209.6px;top:719px;width:269.0px;height:60.5px;box-sizing:border-box;background:#fff;border:1.5px solid #cfcfcf;border-radius:9px"></div>
<svg style="position:absolute;left:2229.5px;top:734.5px;" width="30" height="30" viewBox="0 0 30 30"><rect x="1.6" y="1.6" width="26.8" height="26.8" rx="2" fill="none" stroke="#365a8b" stroke-width="3"/><path d="M9 13v10M15 8v15M21 17.5v5.5" stroke="#365a8b" stroke-width="3.2"/></svg>
<div class="t" style="left:2290.3px;top:737.8px;font-size:25px;line-height:25px;color:#1b1b1b;font-weight:400;letter-spacing:1.02px;-webkit-text-stroke:0.45px #1b1b1b;">Graphics</div>
<svg style="position:absolute;left:2436px;top:745px;" width="16" height="9.5" viewBox="0 0 16 9.5"><path d="M0 0h16L8 9.4z" fill="#111"/></svg>
<div style="position:absolute;left:2494px;top:719px;width:269.5999999999999px;height:60.5px;box-sizing:border-box;background:#fff;border:1.5px solid #cfcfcf;border-radius:9px"></div>
<svg style="position:absolute;left:2509px;top:735px;" width="40" height="28" viewBox="0 0 40 28"><path d="M10 26.3C5 26.3 1.6 23 1.6 18.6c0-3.9 2.8-7 6.6-7.6C9.5 5.5 14.2 1.6 19.8 1.6c5.7 0 10.4 4.1 11.3 9.5 4.3.5 7.3 3.6 7.3 7.7 0 4.2-3.4 7.5-8 7.5z" fill="none" stroke="#365a8b" stroke-width="3"/><path d="M20 10.8v6.5" stroke="#365a8b" stroke-width="3.2"/><path d="M13.8 17H26.2L20 22.2z" fill="#365a8b"/></svg>
<div class="t" style="left:2581.3px;top:737.8px;font-size:25px;line-height:25px;color:#1b1b1b;font-weight:400;letter-spacing:1.61px;-webkit-text-stroke:0.45px #1b1b1b;">Exports</div>
<svg style="position:absolute;left:2720.4px;top:745px;" width="16" height="9.5" viewBox="0 0 16 9.5"><path d="M0 0h16L8 9.4z" fill="#111"/></svg>
<svg style="position:absolute;left:2786px;top:625px;" width="21" height="13" viewBox="0 0 21 13"><path d="M1.5 11.5L10.5 2.5L19.5 11.5" stroke="#111" stroke-width="3.6" fill="none"/></svg>
<div style="position:absolute;left:1320px;top:803px;width:1523px;height:693px;box-sizing:border-box;background:#f6f7f9"></div>
<div style="position:absolute;left:122px;top:803.5px;width:1217px;height:716.5px;box-sizing:border-box;background:#fff;border:1.5px solid #e6e6e6;border-radius:13px"></div>
<div class="t" style="left:149.6px;top:818.9px;font-size:22.6px;line-height:22.6px;color:#365a8b;font-weight:400;-webkit-text-stroke-width:0.3px;">Results 1 - 500 of 1012</div>
<div style="position:absolute;left:137.8px;top:854px;width:1185.8px;height:52px;box-sizing:border-box;background:#365a8b"></div>
<div class="t" style="left:149.0px;top:868.8px;font-size:23.9px;line-height:23.9px;color:#fff;font-weight:400;-webkit-text-stroke-width:0.3px;">LEAGUE</div>
<div style="position:absolute;left:137.8px;top:968.0px;width:1185.8px;height:1.3999999999999773px;box-sizing:border-box;background:#b9c9dc"></div>
<div class="t" style="left:221.6px;top:927.7px;font-size:20.7px;line-height:20.7px;color:#2d2d2d;font-weight:700;letter-spacing:-0.35px;">#</div>
<div class="t" style="left:267.3px;top:927.4px;font-size:21.0px;line-height:21.0px;color:#2d2d2d;font-weight:700;letter-spacing:-0.35px;">Player</div>
<div class="t" style="left:-828.0px;width:1500px;text-align:right;top:928.3px;font-size:20.0px;line-height:20.0px;color:#2d2d2d;font-weight:700;letter-spacing:-0.35px;">Season</div>
<div class="t" style="left:-773.0px;width:1500px;text-align:right;top:928.2px;font-size:20.1px;line-height:20.1px;color:#2d2d2d;font-weight:700;letter-spacing:-0.35px;">QS</div>
<div class="t" style="left:-684.0px;width:1500px;text-align:right;top:928.0px;font-size:20.3px;line-height:20.3px;color:#2d2d2d;font-weight:700;letter-spacing:-0.35px;">K%</div>
<div class="t" style="left:-595.7px;width:1500px;text-align:right;top:928.3px;font-size:20.0px;line-height:20.0px;color:#2d2d2d;font-weight:700;letter-spacing:-0.35px;">BB%</div>
<div class="t" style="left:-506.4px;width:1500px;text-align:right;top:927.7px;font-size:20.7px;line-height:20.7px;color:#2d2d2d;font-weight:700;letter-spacing:-0.35px;">FPStk%</div>
<svg style="position:absolute;left:1008px;top:932.9000000000001px;" width="16.5" height="9" viewBox="0 0 16.5 9"><path d="M0 0h16.5L8.25 9z" fill="#777"/></svg>
<div class="t" style="left:-363.8px;width:1500px;text-align:right;top:927.5px;font-size:20.9px;line-height:20.9px;color:#2d2d2d;font-weight:700;letter-spacing:-0.35px;">InZone%</div>
<div class="t" style="left:-275.4px;width:1500px;text-align:right;top:927.9px;font-size:20.4px;line-height:20.4px;color:#2d2d2d;font-weight:700;letter-spacing:-0.35px;">Miss%</div>
<div class="t" style="left:-184.0px;width:1500px;text-align:right;top:928.0px;font-size:20.3px;line-height:20.3px;color:#2d2d2d;font-weight:700;letter-spacing:-0.35px;">Chase%</div>
<div style="position:absolute;left:137.8px;top:969.4px;width:1185.8px;height:52.80000000000007px;box-sizing:border-box;background:#fff;border-bottom:1.3px solid #dadada"></div>
<div class="t" style="left:267.0px;top:984.6px;font-size:22.9px;line-height:22.9px;color:#333;font-weight:400;-webkit-text-stroke-width:0.3px;">AVERAGE</div>
<div class="t" style="left:-776.4px;width:1500px;text-align:right;top:984.4px;font-size:23.2px;line-height:23.2px;color:#333;font-weight:400;-webkit-text-stroke-width:0.3px;">3.4</div>
<div class="t" style="left:-687.8px;width:1500px;text-align:right;top:984.4px;font-size:23.2px;line-height:23.2px;color:#365a8b;font-weight:400;-webkit-text-stroke-width:0.3px;">23.1%</div>
<div class="t" style="left:-599.6px;width:1500px;text-align:right;top:984.4px;font-size:23.2px;line-height:23.2px;color:#365a8b;font-weight:400;-webkit-text-stroke-width:0.3px;">7.6%</div>
<div class="t" style="left:-467.0px;width:1500px;text-align:right;top:984.4px;font-size:23.2px;line-height:23.2px;color:#365a8b;font-weight:400;-webkit-text-stroke-width:0.3px;">62.7%</div>
<div class="t" style="left:-367.7px;width:1500px;text-align:right;top:984.4px;font-size:23.2px;line-height:23.2px;color:#365a8b;font-weight:400;-webkit-text-stroke-width:0.3px;">49.2%</div>
<div class="t" style="left:-278.8px;width:1500px;text-align:right;top:984.4px;font-size:23.2px;line-height:23.2px;color:#365a8b;font-weight:400;-webkit-text-stroke-width:0.3px;">26.4%</div>
<div class="t" style="left:-187.7px;width:1500px;text-align:right;top:984.4px;font-size:23.2px;line-height:23.2px;color:#365a8b;font-weight:400;-webkit-text-stroke-width:0.3px;">29.9%</div>
<div style="position:absolute;left:137.8px;top:1022.2px;width:1185.8px;height:50.299999999999955px;box-sizing:border-box;background:#f8f8f8;"></div>
<div class="t" style="left:267.0px;top:1037.4px;font-size:22.9px;line-height:22.9px;color:#333;font-weight:400;-webkit-text-stroke-width:0.3px;">90 PERCENTILE</div>
<div class="t" style="left:-832.0px;width:1500px;text-align:right;top:1037.2px;font-size:23.2px;line-height:23.2px;color:#333;font-weight:400;-webkit-text-stroke-width:0.3px;">2022</div>
<div class="t" style="left:-776.4px;width:1500px;text-align:right;top:1037.2px;font-size:23.2px;line-height:23.2px;color:#333;font-weight:400;-webkit-text-stroke-width:0.3px;">12</div>
<div class="t" style="left:-687.8px;width:1500px;text-align:right;top:1037.2px;font-size:23.2px;line-height:23.2px;color:#333;font-weight:400;-webkit-text-stroke-width:0.3px;">31.7%</div>
<div class="t" style="left:-599.6px;width:1500px;text-align:right;top:1037.2px;font-size:23.2px;line-height:23.2px;color:#333;font-weight:400;-webkit-text-stroke-width:0.3px;">4.2%</div>
<div class="t" style="left:-467.0px;width:1500px;text-align:right;top:1037.2px;font-size:23.2px;line-height:23.2px;color:#333;font-weight:400;-webkit-text-stroke-width:0.3px;">68.8%</div>
<div class="t" style="left:-367.7px;width:1500px;text-align:right;top:1037.2px;font-size:23.2px;line-height:23.2px;color:#333;font-weight:400;-webkit-text-stroke-width:0.3px;">53.7%</div>
<div class="t" style="left:-278.8px;width:1500px;text-align:right;top:1037.2px;font-size:23.2px;line-height:23.2px;color:#333;font-weight:400;-webkit-text-stroke-width:0.3px;">34.2%</div>
<div class="t" style="left:-187.7px;width:1500px;text-align:right;top:1037.2px;font-size:23.2px;line-height:23.2px;color:#333;font-weight:400;-webkit-text-stroke-width:0.3px;">34.6%</div>
<div style="position:absolute;left:137.8px;top:1072px;width:1185.8px;height:53px;box-sizing:border-box;background:#365a8b"></div>
<div class="t" style="left:150.0px;top:1088.7px;font-size:23.04px;line-height:23.04px;color:#fff;font-weight:400;-webkit-text-stroke-width:0.3px;">PLAYERS</div>
<div style="position:absolute;left:137.8px;top:1186.8999999999999px;width:1185.8px;height:1.400000000000091px;box-sizing:border-box;background:#b9c9dc"></div>
<svg style="position:absolute;left:161px;top:1145px;" width="18" height="25" viewBox="0 0 18 25"><path d="M3 0h12v3.2h-2.2v6.5l4.2 4.8v2.2H10.3V25H7.7V16.7H1v-2.2l4.2-4.8V3.2H3z" fill="#5b88c0"/></svg>
<div class="t" style="left:221.6px;top:1146.7px;font-size:20.7px;line-height:20.7px;color:#2d2d2d;font-weight:700;letter-spacing:-0.35px;">#</div>
<div class="t" style="left:267.3px;top:1146.4px;font-size:21.0px;line-height:21.0px;color:#2d2d2d;font-weight:700;letter-spacing:-0.35px;">Player</div>
<div class="t" style="left:-828.0px;width:1500px;text-align:right;top:1147.3px;font-size:20.0px;line-height:20.0px;color:#2d2d2d;font-weight:700;letter-spacing:-0.35px;">Season</div>
<div class="t" style="left:-773.0px;width:1500px;text-align:right;top:1147.2px;font-size:20.1px;line-height:20.1px;color:#2d2d2d;font-weight:700;letter-spacing:-0.35px;">QS</div>
<div class="t" style="left:-684.0px;width:1500px;text-align:right;top:1147.0px;font-size:20.3px;line-height:20.3px;color:#2d2d2d;font-weight:700;letter-spacing:-0.35px;">K%</div>
<div class="t" style="left:-595.7px;width:1500px;text-align:right;top:1147.3px;font-size:20.0px;line-height:20.0px;color:#2d2d2d;font-weight:700;letter-spacing:-0.35px;">BB%</div>
<div class="t" style="left:-506.4px;width:1500px;text-align:right;top:1146.7px;font-size:20.7px;line-height:20.7px;color:#2d2d2d;font-weight:700;letter-spacing:-0.35px;">FPStk%</div>
<svg style="position:absolute;left:1008px;top:1151.9px;" width="16.5" height="9" viewBox="0 0 16.5 9"><path d="M0 0h16.5L8.25 9z" fill="#777"/></svg>
<div class="t" style="left:-363.8px;width:1500px;text-align:right;top:1146.5px;font-size:20.9px;line-height:20.9px;color:#2d2d2d;font-weight:700;letter-spacing:-0.35px;">InZone%</div>
<div class="t" style="left:-275.4px;width:1500px;text-align:right;top:1146.9px;font-size:20.4px;line-height:20.4px;color:#2d2d2d;font-weight:700;letter-spacing:-0.35px;">Miss%</div>
<div class="t" style="left:-184.0px;width:1500px;text-align:right;top:1147.0px;font-size:20.3px;line-height:20.3px;color:#2d2d2d;font-weight:700;letter-spacing:-0.35px;">Chase%</div>
<svg style="position:absolute;left:482px;top:1131.8px;" width="91.3" height="50" viewBox="0 0 91.3 50"><path d="M0 19.6H40.7V0L91.3 25 40.7 49.9V30.9H0z" fill="#79f74f"/></svg>
<div style="position:absolute;left:912px;top:1188.3px;width:132.70000000000005px;height:307.70000000000005px;box-sizing:border-box;background:#e4eff9"></div>
<div style="position:absolute;left:137.8px;top:1188.3px;width:774.2px;height:59.700000000000045px;box-sizing:border-box;background:#f8f8f8;border-bottom:1.3px solid #dadada"></div>
<div style="position:absolute;left:912px;top:1188.3px;width:132.70000000000005px;height:59.700000000000045px;box-sizing:border-box;background:#e4eff9;border-bottom:1.3px solid #d0dae6"></div>
<div style="position:absolute;left:1044.7px;top:1188.3px;width:278.89999999999986px;height:59.700000000000045px;box-sizing:border-box;background:#f8f8f8;border-bottom:1.3px solid #dadada"></div>
<svg style="position:absolute;left:152.9px;top:1201.7px;" width="23.5" height="33" viewBox="0 0 23.5 33"><path d="M3.5 0H20a1.8 1.8 0 0 1 0 3.6H19V11.5C19 13.5 21 15.5 23.5 16V20H13.6V31.3a1.8 1.8 0 0 1-3.6 0V20H0V16C2.5 15.5 4.5 13.5 4.5 11.5V3.6H3.5a1.8 1.8 0 0 1 0-3.6Z" fill="#000"/></svg>
<svg style="position:absolute;left:262px;top:1196.5px;" width="50" height="50" viewBox="0 0 50 50"><g fill="#2a5a9c"><rect x="12.3" y="5.2" width="3" height="26.7"/><rect x="9.3" y="5.2" width="8.8" height="3.2"/><rect x="9.3" y="29.1" width="24.7" height="2.8"/><rect x="31.2" y="25.2" width="2.8" height="6.7"/><rect x="20.3" y="13.8" width="5.4" height="2.8"/><rect x="12.1" y="37.3" width="8.8" height="3.4"/><rect x="24.3" y="37.3" width="9.7" height="3.4"/></g><path d="M21.8 14.5L16.2 38M24.2 14.5L30.8 38" stroke="#2a5a9c" stroke-width="3.6"/></svg>
<div class="t" style="left:-1252.2px;width:1500px;text-align:right;top:1207.2px;font-size:23.2px;line-height:23.2px;color:#333;font-weight:400;-webkit-text-stroke-width:0.3px;">1</div>
<div class="t" style="left:308.6px;top:1207.3px;font-size:23px;line-height:23px;color:#365a8b;font-weight:400;letter-spacing:0.17px;-webkit-text-stroke-width:0.3px;">C. Martin (P - LAD)</div>
<div class="t" style="left:-832.0px;width:1500px;text-align:right;top:1206.0px;font-size:24.6px;line-height:24.6px;color:#333;font-weight:400;-webkit-text-stroke-width:0.3px;">2022</div>
<div class="t" style="left:-776.4px;width:1500px;text-align:right;top:1207.2px;font-size:23.2px;line-height:23.2px;color:#333;font-weight:400;-webkit-text-stroke-width:0.3px;">0</div>
<div class="t" style="left:-687.8px;width:1500px;text-align:right;top:1207.2px;font-size:23.2px;line-height:23.2px;color:#365a8b;font-weight:400;-webkit-text-stroke-width:0.3px;">36.7%</div>
<div class="t" style="left:-599.6px;width:1500px;text-align:right;top:1207.2px;font-size:23.2px;line-height:23.2px;color:#365a8b;font-weight:400;-webkit-text-stroke-width:0.3px;">0.0%</div>
<div class="t" style="left:-467.0px;width:1500px;text-align:right;top:1207.0px;font-size:23.4px;line-height:23.4px;color:#365a8b;font-weight:700;">83.3%</div>
<div class="t" style="left:-367.7px;width:1500px;text-align:right;top:1207.2px;font-size:23.2px;line-height:23.2px;color:#365a8b;font-weight:400;-webkit-text-stroke-width:0.3px;">57.7%</div>
<div class="t" style="left:-278.8px;width:1500px;text-align:right;top:1207.2px;font-size:23.2px;line-height:23.2px;color:#365a8b;font-weight:400;-webkit-text-stroke-width:0.3px;">25.3%</div>
<div class="t" style="left:-187.7px;width:1500px;text-align:right;top:1207.2px;font-size:23.2px;line-height:23.2px;color:#365a8b;font-weight:400;-webkit-text-stroke-width:0.3px;">33.5%</div>
<div style="position:absolute;left:137.8px;top:1248.0px;width:774.2px;height:58.549999999999955px;box-sizing:border-box;background:#fff;border-bottom:1.3px solid #dadada"></div>
<div style="position:absolute;left:912px;top:1248.0px;width:132.70000000000005px;height:58.549999999999955px;box-sizing:border-box;background:#e4eff9;border-bottom:1.3px solid #d0dae6"></div>
<div style="position:absolute;left:1044.7px;top:1248.0px;width:278.89999999999986px;height:58.549999999999955px;box-sizing:border-box;background:#fff;border-bottom:1.3px solid #dadada"></div>
<svg style="position:absolute;left:152.9px;top:1260.25px;" width="23.5" height="33" viewBox="0 0 23.5 33"><path d="M3.5 0H20a1.8 1.8 0 0 1 0 3.6H19V11.5C19 13.5 21 15.5 23.5 16V20H13.6V31.3a1.8 1.8 0 0 1-3.6 0V20H0V16C2.5 15.5 4.5 13.5 4.5 11.5V3.6H3.5a1.8 1.8 0 0 1 0-3.6Z" fill="#000"/></svg>
<svg style="position:absolute;left:262px;top:1253.05px;" width="50" height="50" viewBox="0 0 50 50"><path fill-rule="evenodd" fill="#c0393f" stroke="#0c2340" stroke-width="1.1" d="M11 11C12 8 15 7 18 8C21 6.5 25 6.5 28 8C31.5 10 33 13 32.5 16.5C32 19.5 30 22 28.5 23.5C32 25 34 28.5 34 32C34 37 30 41 24 41C21 41 19.5 40.5 18 40C15 41 12 40 11 37C13 37.5 15 37 16.5 35V25.5C15 25.5 14 24.5 13.5 24C14 23.5 15 22.5 16.5 22.5V13C15 11.5 13 11 11 11ZM20.3 11H25C27.5 11 28.5 13.5 28.5 16.5C28.5 19.5 27 22 25 22H20.3ZM20.3 26H25.5C28.5 26 29.5 29 29.5 32C29.5 35 28 37.5 25.5 37.5H20.3Z"/></svg>
<div class="t" style="left:-1252.2px;width:1500px;text-align:right;top:1265.7px;font-size:23.2px;line-height:23.2px;color:#333;font-weight:400;-webkit-text-stroke-width:0.3px;">2</div>
<div class="t" style="left:308.6px;top:1265.9px;font-size:23px;line-height:23px;color:#365a8b;font-weight:400;letter-spacing:0.03px;-webkit-text-stroke-width:0.3px;">C. Martin (P - BOS)</div>
<div class="t" style="left:-832.0px;width:1500px;text-align:right;top:1264.5px;font-size:24.6px;line-height:24.6px;color:#333;font-weight:400;-webkit-text-stroke-width:0.3px;">2023</div>
<div class="t" style="left:-776.4px;width:1500px;text-align:right;top:1265.7px;font-size:23.2px;line-height:23.2px;color:#333;font-weight:400;-webkit-text-stroke-width:0.3px;">0</div>
<div class="t" style="left:-687.8px;width:1500px;text-align:right;top:1265.7px;font-size:23.2px;line-height:23.2px;color:#365a8b;font-weight:400;-webkit-text-stroke-width:0.3px;">22.1%</div>
<div class="t" style="left:-599.6px;width:1500px;text-align:right;top:1265.7px;font-size:23.2px;line-height:23.2px;color:#365a8b;font-weight:400;-webkit-text-stroke-width:0.3px;">2.7%</div>
<div class="t" style="left:-467.0px;width:1500px;text-align:right;top:1265.5px;font-size:23.4px;line-height:23.4px;color:#365a8b;font-weight:700;">79.3%</div>
<div class="t" style="left:-367.7px;width:1500px;text-align:right;top:1265.7px;font-size:23.2px;line-height:23.2px;color:#365a8b;font-weight:400;-webkit-text-stroke-width:0.3px;">59.8%</div>
<div class="t" style="left:-278.8px;width:1500px;text-align:right;top:1265.7px;font-size:23.2px;line-height:23.2px;color:#365a8b;font-weight:400;-webkit-text-stroke-width:0.3px;">22.2%</div>
<div class="t" style="left:-187.7px;width:1500px;text-align:right;top:1265.7px;font-size:23.2px;line-height:23.2px;color:#365a8b;font-weight:400;-webkit-text-stroke-width:0.3px;">36.3%</div>
<div style="position:absolute;left:137.8px;top:1306.55px;width:774.2px;height:58.549999999999955px;box-sizing:border-box;background:#f8f8f8;border-bottom:1.3px solid #dadada"></div>
<div style="position:absolute;left:912px;top:1306.55px;width:132.70000000000005px;height:58.549999999999955px;box-sizing:border-box;background:#e4eff9;border-bottom:1.3px solid #d0dae6"></div>
<div style="position:absolute;left:1044.7px;top:1306.55px;width:278.89999999999986px;height:58.549999999999955px;box-sizing:border-box;background:#f8f8f8;border-bottom:1.3px solid #dadada"></div>
<svg style="position:absolute;left:152.9px;top:1318.8px;" width="23.5" height="33" viewBox="0 0 23.5 33"><path d="M3.5 0H20a1.8 1.8 0 0 1 0 3.6H19V11.5C19 13.5 21 15.5 23.5 16V20H13.6V31.3a1.8 1.8 0 0 1-3.6 0V20H0V16C2.5 15.5 4.5 13.5 4.5 11.5V3.6H3.5a1.8 1.8 0 0 1 0-3.6Z" fill="#000"/></svg>
<svg style="position:absolute;left:262px;top:1311.6px;" width="50" height="50" viewBox="0 0 50 50"><path fill-rule="evenodd" fill="#c0393f" stroke="#0c2340" stroke-width="1.1" d="M11 11C12 8 15 7 18 8C21 6.5 25 6.5 28 8C31.5 10 33 13 32.5 16.5C32 19.5 30 22 28.5 23.5C32 25 34 28.5 34 32C34 37 30 41 24 41C21 41 19.5 40.5 18 40C15 41 12 40 11 37C13 37.5 15 37 16.5 35V25.5C15 25.5 14 24.5 13.5 24C14 23.5 15 22.5 16.5 22.5V13C15 11.5 13 11 11 11ZM20.3 11H25C27.5 11 28.5 13.5 28.5 16.5C28.5 19.5 27 22 25 22H20.3ZM20.3 26H25.5C28.5 26 29.5 29 29.5 32C29.5 35 28 37.5 25.5 37.5H20.3Z"/></svg>
<div class="t" style="left:-1252.2px;width:1500px;text-align:right;top:1324.3px;font-size:23.2px;line-height:23.2px;color:#333;font-weight:400;-webkit-text-stroke-width:0.3px;">3</div>
<div class="t" style="left:308.6px;top:1324.4px;font-size:23px;line-height:23px;color:#365a8b;font-weight:400;letter-spacing:-0.3px;-webkit-text-stroke-width:0.3px;">R. Bleier (P - BOS)</div>
<div class="t" style="left:-832.0px;width:1500px;text-align:right;top:1323.1px;font-size:24.6px;line-height:24.6px;color:#333;font-weight:400;-webkit-text-stroke-width:0.3px;">2023</div>
<div class="t" style="left:-776.4px;width:1500px;text-align:right;top:1324.3px;font-size:23.2px;line-height:23.2px;color:#333;font-weight:400;-webkit-text-stroke-width:0.3px;">0</div>
<div class="t" style="left:-687.8px;width:1500px;text-align:right;top:1324.3px;font-size:23.2px;line-height:23.2px;color:#365a8b;font-weight:400;-webkit-text-stroke-width:0.3px;">11.8%</div>
<div class="t" style="left:-599.6px;width:1500px;text-align:right;top:1324.3px;font-size:23.2px;line-height:23.2px;color:#365a8b;font-weight:400;-webkit-text-stroke-width:0.3px;">4.7%</div>
<div class="t" style="left:-467.0px;width:1500px;text-align:right;top:1324.1px;font-size:23.4px;line-height:23.4px;color:#365a8b;font-weight:700;">78.3%</div>
<div class="t" style="left:-367.7px;width:1500px;text-align:right;top:1324.3px;font-size:23.2px;line-height:23.2px;color:#365a8b;font-weight:400;-webkit-text-stroke-width:0.3px;">49.3%</div>
<div class="t" style="left:-278.8px;width:1500px;text-align:right;top:1324.3px;font-size:23.2px;line-height:23.2px;color:#365a8b;font-weight:400;-webkit-text-stroke-width:0.3px;">17.9%</div>
<div class="t" style="left:-187.7px;width:1500px;text-align:right;top:1324.3px;font-size:23.2px;line-height:23.2px;color:#365a8b;font-weight:400;-webkit-text-stroke-width:0.3px;">43.4%</div>
<div style="position:absolute;left:137.8px;top:1365.1000000000001px;width:774.2px;height:58.549999999999955px;box-sizing:border-box;background:#fff;border-bottom:1.3px solid #dadada"></div>
<div style="position:absolute;left:912px;top:1365.1000000000001px;width:132.70000000000005px;height:58.549999999999955px;box-sizing:border-box;background:#e4eff9;border-bottom:1.3px solid #d0dae6"></div>
<div style="position:absolute;left:1044.7px;top:1365.1000000000001px;width:278.89999999999986px;height:58.549999999999955px;box-sizing:border-box;background:#fff;border-bottom:1.3px solid #dadada"></div>
<svg style="position:absolute;left:152.9px;top:1377.3500000000001px;" width="23.5" height="33" viewBox="0 0 23.5 33"><path d="M3.5 0H20a1.8 1.8 0 0 1 0 3.6H19V11.5C19 13.5 21 15.5 23.5 16V20H13.6V31.3a1.8 1.8 0 0 1-3.6 0V20H0V16C2.5 15.5 4.5 13.5 4.5 11.5V3.6H3.5a1.8 1.8 0 0 1 0-3.6Z" fill="#000"/></svg>
<svg style="position:absolute;left:262px;top:1370.95px;" width="50" height="50" viewBox="0 0 50 50"><path d="M15 18.2C17 15.5 22 14.5 27 13.8C30 13.3 32.5 12.3 33.5 11.5L35 12.8L34.5 14.5C32 15.5 30.5 17.5 28.5 18.5C25.5 19 22 18 18.5 17.5C17 17.5 15.8 18 15 18.2Z" fill="#1d4f91"/><path d="M6 21.3L26.5 20.3" stroke="#0d1b40" stroke-width="1.4"/><circle cx="18.9" cy="20.5" r="1.3" fill="#0d1b40"/><path d="M7.5 22.3C12 22.8 16 25 19 29C21 31.5 22.5 34 23.5 37L29.5 25.5L27.5 26.2C26.3 28.5 25 31.5 23.8 33.5C22 29 19 25 14 23Z" fill="#0d1b40"/><path d="M33 16.3L34.6 19.2L36.3 18.6L35.6 22L39.7 20.2L38.6 23L39.7 23.6L36 26.2L36.3 27L33.4 26.5V28.5H32.6V26.5L29.7 27L30 26.2L26.3 23.6L27.4 23L26.3 20.2L30.4 22L29.7 18.6L31.4 19.2Z" fill="#dd4b2a"/></svg>
<div class="t" style="left:-1252.2px;width:1500px;text-align:right;top:1382.8px;font-size:23.2px;line-height:23.2px;color:#333;font-weight:400;-webkit-text-stroke-width:0.3px;">4</div>
<div class="t" style="left:308.6px;top:1383.0px;font-size:23px;line-height:23px;color:#365a8b;font-weight:400;letter-spacing:-0.45px;-webkit-text-stroke-width:0.3px;">J. Jackson (P - TOR)</div>
<div class="t" style="left:-832.0px;width:1500px;text-align:right;top:1381.6px;font-size:24.6px;line-height:24.6px;color:#333;font-weight:400;-webkit-text-stroke-width:0.3px;">2023</div>
<div class="t" style="left:-776.4px;width:1500px;text-align:right;top:1382.8px;font-size:23.2px;line-height:23.2px;color:#333;font-weight:400;-webkit-text-stroke-width:0.3px;">0</div>
<div class="t" style="left:-687.8px;width:1500px;text-align:right;top:1382.8px;font-size:23.2px;line-height:23.2px;color:#365a8b;font-weight:400;-webkit-text-stroke-width:0.3px;">20.3%</div>
<div class="t" style="left:-599.6px;width:1500px;text-align:right;top:1382.8px;font-size:23.2px;line-height:23.2px;color:#365a8b;font-weight:400;-webkit-text-stroke-width:0.3px;">4.1%</div>
<div class="t" style="left:-467.0px;width:1500px;text-align:right;top:1382.6px;font-size:23.4px;line-height:23.4px;color:#365a8b;font-weight:700;">78.1%</div>
<div class="t" style="left:-367.7px;width:1500px;text-align:right;top:1382.8px;font-size:23.2px;line-height:23.2px;color:#365a8b;font-weight:400;-webkit-text-stroke-width:0.3px;">50.4%</div>
<div class="t" style="left:-278.8px;width:1500px;text-align:right;top:1382.8px;font-size:23.2px;line-height:23.2px;color:#365a8b;font-weight:400;-webkit-text-stroke-width:0.3px;">30.9%</div>
<div class="t" style="left:-187.7px;width:1500px;text-align:right;top:1382.8px;font-size:23.2px;line-height:23.2px;color:#365a8b;font-weight:400;-webkit-text-stroke-width:0.3px;">31.1%</div>
<div style="position:absolute;left:137.8px;top:1423.65px;width:774.2px;height:58.549999999999955px;box-sizing:border-box;background:#f8f8f8;border-bottom:1.3px solid #dadada"></div>
<div style="position:absolute;left:912px;top:1423.65px;width:132.70000000000005px;height:58.549999999999955px;box-sizing:border-box;background:#e4eff9;border-bottom:1.3px solid #d0dae6"></div>
<div style="position:absolute;left:1044.7px;top:1423.65px;width:278.89999999999986px;height:58.549999999999955px;box-sizing:border-box;background:#f8f8f8;border-bottom:1.3px solid #dadada"></div>
<svg style="position:absolute;left:152.9px;top:1435.9px;" width="23.5" height="33" viewBox="0 0 23.5 33"><path d="M3.5 0H20a1.8 1.8 0 0 1 0 3.6H19V11.5C19 13.5 21 15.5 23.5 16V20H13.6V31.3a1.8 1.8 0 0 1-3.6 0V20H0V16C2.5 15.5 4.5 13.5 4.5 11.5V3.6H3.5a1.8 1.8 0 0 1 0-3.6Z" fill="#000"/></svg>
<svg style="position:absolute;left:262px;top:1423.5px;" width="50" height="50" viewBox="0 0 50 50"><text x="11.8" y="44.2" transform="scale(1,1)" font-family="Liberation Serif" font-weight="700" font-size="48" textLength="21" lengthAdjust="spacingAndGlyphs" fill="#c4ced4" stroke="#0d5257" stroke-width="1.3">S</text><path d="M23 14v28M14.5 25h17" stroke="#0d5257" stroke-width="0.9"/></svg>
<div class="t" style="left:-1252.2px;width:1500px;text-align:right;top:1441.4px;font-size:23.2px;line-height:23.2px;color:#333;font-weight:400;-webkit-text-stroke-width:0.3px;">5</div>
<div class="t" style="left:308.6px;top:1441.5px;font-size:23px;line-height:23px;color:#365a8b;font-weight:400;letter-spacing:-0.55px;-webkit-text-stroke-width:0.3px;">G. Speier (P - SEA)</div>
<div class="t" style="left:-832.0px;width:1500px;text-align:right;top:1440.2px;font-size:24.6px;line-height:24.6px;color:#333;font-weight:400;-webkit-text-stroke-width:0.3px;">2023</div>
<div class="t" style="left:-776.4px;width:1500px;text-align:right;top:1441.4px;font-size:23.2px;line-height:23.2px;color:#333;font-weight:400;-webkit-text-stroke-width:0.3px;">0</div>
<div class="t" style="left:-687.8px;width:1500px;text-align:right;top:1441.4px;font-size:23.2px;line-height:23.2px;color:#365a8b;font-weight:400;-webkit-text-stroke-width:0.3px;">27.0%</div>
<div class="t" style="left:-599.6px;width:1500px;text-align:right;top:1441.4px;font-size:23.2px;line-height:23.2px;color:#365a8b;font-weight:400;-webkit-text-stroke-width:0.3px;">8.1%</div>
<div class="t" style="left:-467.0px;width:1500px;text-align:right;top:1441.2px;font-size:23.4px;line-height:23.4px;color:#365a8b;font-weight:700;">77.3%</div>
<div class="t" style="left:-367.7px;width:1500px;text-align:right;top:1441.4px;font-size:23.2px;line-height:23.2px;color:#365a8b;font-weight:400;-webkit-text-stroke-width:0.3px;">46.6%</div>
<div class="t" style="left:-278.8px;width:1500px;text-align:right;top:1441.4px;font-size:23.2px;line-height:23.2px;color:#365a8b;font-weight:400;-webkit-text-stroke-width:0.3px;">29.0%</div>
<div class="t" style="left:-187.7px;width:1500px;text-align:right;top:1441.4px;font-size:23.2px;line-height:23.2px;color:#365a8b;font-weight:400;-webkit-text-stroke-width:0.3px;">35.3%</div>
<div style="position:absolute;left:137.8px;top:1482.2px;width:774.2px;height:58.549999999999955px;box-sizing:border-box;background:#fff;border-bottom:1.3px solid #dadada"></div>
<div style="position:absolute;left:912px;top:1482.2px;width:132.70000000000005px;height:58.549999999999955px;box-sizing:border-box;background:#e4eff9;border-bottom:1.3px solid #d0dae6"></div>
<div style="position:absolute;left:1044.7px;top:1482.2px;width:278.89999999999986px;height:58.549999999999955px;box-sizing:border-box;background:#fff;border-bottom:1.3px solid #dadada"></div>
<svg style="position:absolute;left:152.9px;top:1494.45px;" width="23.5" height="33" viewBox="0 0 23.5 33"><path d="M3.5 0H20a1.8 1.8 0 0 1 0 3.6H19V11.5C19 13.5 21 15.5 23.5 16V20H13.6V31.3a1.8 1.8 0 0 1-3.6 0V20H0V16C2.5 15.5 4.5 13.5 4.5 11.5V3.6H3.5a1.8 1.8 0 0 1 0-3.6Z" fill="#000"/></svg>
<div style="position:absolute;left:269px;top:1493.05px;width:29px;height:8.5px;box-sizing:border-box;background:#bd2e3a"></div>
<div style="position:absolute;left:0;top:1350px;width:2876px;height:146px;pointer-events:none;background:radial-gradient(ellipse 620px 72px at 1330px 162px, rgba(0,0,0,0.12), rgba(0,0,0,0.05) 50%, rgba(0,0,0,0) 100%);"></div></div></body></html>
